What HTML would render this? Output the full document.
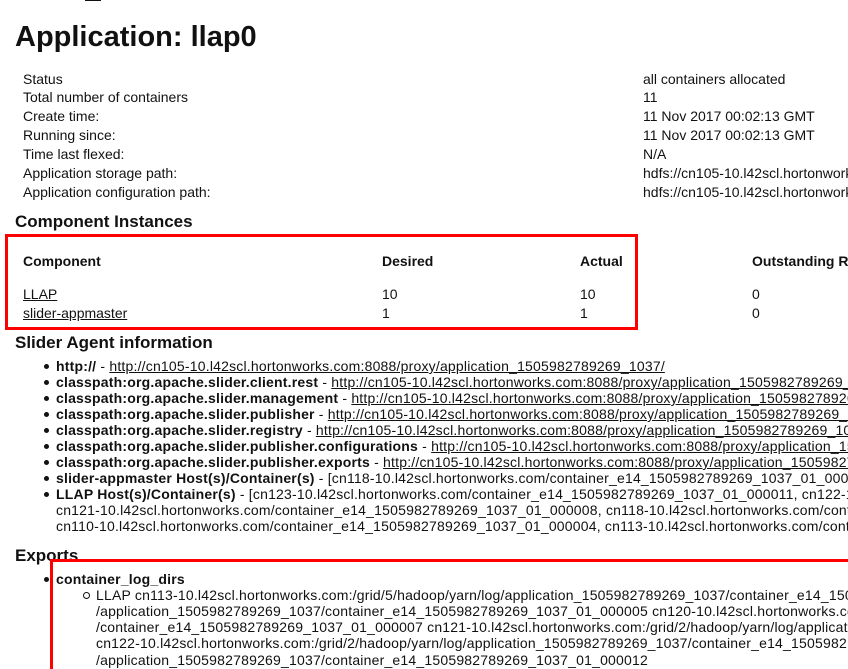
<!DOCTYPE html>
<html><head><meta charset="utf-8"><style>
html,body{margin:0;padding:0;width:848px;height:669px;overflow:hidden;background:#fff;}
body{position:relative;font-family:"Liberation Sans",Arial,sans-serif;font-size:14px;color:#111;}
.t{position:absolute;white-space:nowrap;line-height:16px;}
.s{letter-spacing:0.2px;}
.b{font-weight:bold;}
a{color:#111;text-decoration:underline;}
.h2{font-weight:bold;font-size:17px;}
.box{position:absolute;border:3px solid #f00;box-sizing:border-box;}
.dot{position:absolute;width:5px;height:5px;border-radius:50%;background:#111;}
.circ{position:absolute;border-radius:50%;border:1px solid #111;box-sizing:border-box;width:7px;height:7px;}
.clip{position:absolute;left:0;top:0;width:848px;height:669px;overflow:hidden;}
</style></head><body><div class="clip">
<div style="position:absolute;left:85px;top:-2px;width:16px;height:3px;background:#111"></div>
<div class="t b" style="left:15px;top:20px;font-size:29px;line-height:34px;">Application: llap0</div>

<div class="t" style="left:23px;top:71px">Status</div><div class="t" style="left:643px;top:71px">all containers allocated</div>
<div class="t" style="left:23px;top:89px">Total number of containers</div><div class="t" style="left:643px;top:89px">11</div>
<div class="t" style="left:23px;top:108px">Create time:</div><div class="t" style="left:643px;top:108px">11 Nov 2017 00:02:13 GMT</div>
<div class="t" style="left:23px;top:127px">Running since:</div><div class="t" style="left:643px;top:127px">11 Nov 2017 00:02:13 GMT</div>
<div class="t" style="left:23px;top:146px">Time last flexed:</div><div class="t" style="left:643px;top:146px">N/A</div>
<div class="t" style="left:23px;top:165px">Application storage path:</div><div class="t" style="left:643px;top:165px">hdfs://cn105-10.l42scl.hortonworks</div>
<div class="t" style="left:23px;top:184px">Application configuration path:</div><div class="t" style="left:643px;top:184px">hdfs://cn105-10.l42scl.hortonworks</div>

<div class="t h2" style="left:15px;top:214px">Component Instances</div>
<div class="box" style="left:5px;top:234px;width:633px;height:96px"></div>
<div class="t b" style="left:23px;top:253px">Component</div>
<div class="t b" style="left:382px;top:253px">Desired</div>
<div class="t b" style="left:580px;top:253px">Actual</div>
<div class="t b" style="left:752px;top:253px">Outstanding R</div>
<div class="t" style="left:23px;top:286px"><a>LLAP</a></div><div class="t" style="left:382px;top:286px">10</div><div class="t" style="left:580px;top:286px">10</div><div class="t" style="left:752px;top:286px">0</div>
<div class="t" style="left:23px;top:305px"><a>slider-appmaster</a></div><div class="t" style="left:382px;top:305px">1</div><div class="t" style="left:580px;top:305px">1</div><div class="t" style="left:752px;top:305px">0</div>

<div class="t h2" style="left:15px;top:335px">Slider Agent information</div>
<div class="dot" style="left:44px;top:364px"></div><div class="t s" style="left:56px;top:358px"><span class="b">http://</span> - <a>http://cn105-10.l42scl.hortonworks.com:8088/proxy/application_1505982789269_1037/</a></div>
<div class="dot" style="left:44px;top:380px"></div><div class="t s" style="left:56px;top:374px"><span class="b">classpath:org.apache.slider.client.rest</span> - <a>http://cn105-10.l42scl.hortonworks.com:8088/proxy/application_1505982789269_1037</a></div>
<div class="dot" style="left:44px;top:396px"></div><div class="t s" style="left:56px;top:390px"><span class="b">classpath:org.apache.slider.management</span> - <a>http://cn105-10.l42scl.hortonworks.com:8088/proxy/application_1505982789269_1037</a></div>
<div class="dot" style="left:44px;top:412px"></div><div class="t s" style="left:56px;top:406px"><span class="b">classpath:org.apache.slider.publisher</span> - <a>http://cn105-10.l42scl.hortonworks.com:8088/proxy/application_1505982789269_1037</a></div>
<div class="dot" style="left:44px;top:428px"></div><div class="t s" style="left:56px;top:422px"><span class="b">classpath:org.apache.slider.registry</span> - <a>http://cn105-10.l42scl.hortonworks.com:8088/proxy/application_1505982789269_1037</a></div>
<div class="dot" style="left:44px;top:444px"></div><div class="t s" style="left:56px;top:438px"><span class="b">classpath:org.apache.slider.publisher.configurations</span> - <a>http://cn105-10.l42scl.hortonworks.com:8088/proxy/application_1505982789269_1037</a></div>
<div class="dot" style="left:44px;top:460px"></div><div class="t s" style="left:56px;top:454px"><span class="b">classpath:org.apache.slider.publisher.exports</span> - <a>http://cn105-10.l42scl.hortonworks.com:8088/proxy/application_1505982789269_1037</a></div>
<div class="dot" style="left:44px;top:476px"></div><div class="t s" style="left:56px;top:470px"><span class="b">slider-appmaster Host(s)/Container(s)</span> - [cn118-10.l42scl.hortonworks.com/container_e14_1505982789269_1037_01_000001]</div>
<div class="dot" style="left:44px;top:492px"></div><div class="t s" style="left:56px;top:486px"><span class="b">LLAP Host(s)/Container(s)</span> - [cn123-10.l42scl.hortonworks.com/container_e14_1505982789269_1037_01_000011, cn122-10.l42scl</div>
<div class="t s" style="left:56px;top:502px">cn121-10.l42scl.hortonworks.com/container_e14_1505982789269_1037_01_000008, cn118-10.l42scl.hortonworks.com/container</div>
<div class="t s" style="left:56px;top:518px">cn110-10.l42scl.hortonworks.com/container_e14_1505982789269_1037_01_000004, cn113-10.l42scl.hortonworks.com/container</div>

<div class="t h2" style="left:15px;top:548px">Exports</div>
<div class="box" style="left:50px;top:559px;width:798px;height:120px;border-right:none"></div>
<div class="dot" style="left:44px;top:577px"></div><div class="t b s" style="left:56px;top:571px">container_log_dirs</div>
<div class="circ" style="left:83px;top:592px"></div>
<div class="t s" style="left:96px;top:587px">LLAP cn113-10.l42scl.hortonworks.com:/grid/5/hadoop/yarn/log/application_1505982789269_1037/container_e14_150</div>
<div class="t s" style="left:96px;top:603px">/application_1505982789269_1037/container_e14_1505982789269_1037_01_000005 cn120-10.l42scl.hortonworks.co</div>
<div class="t s" style="left:96px;top:619px">/container_e14_1505982789269_1037_01_000007 cn121-10.l42scl.hortonworks.com:/grid/2/hadoop/yarn/log/applicati</div>
<div class="t s" style="left:96px;top:635px">cn122-10.l42scl.hortonworks.com:/grid/2/hadoop/yarn/log/application_1505982789269_1037/container_e14_1505982</div>
<div class="t s" style="left:96px;top:652px">/application_1505982789269_1037/container_e14_1505982789269_1037_01_000012</div>
</div></body></html>
